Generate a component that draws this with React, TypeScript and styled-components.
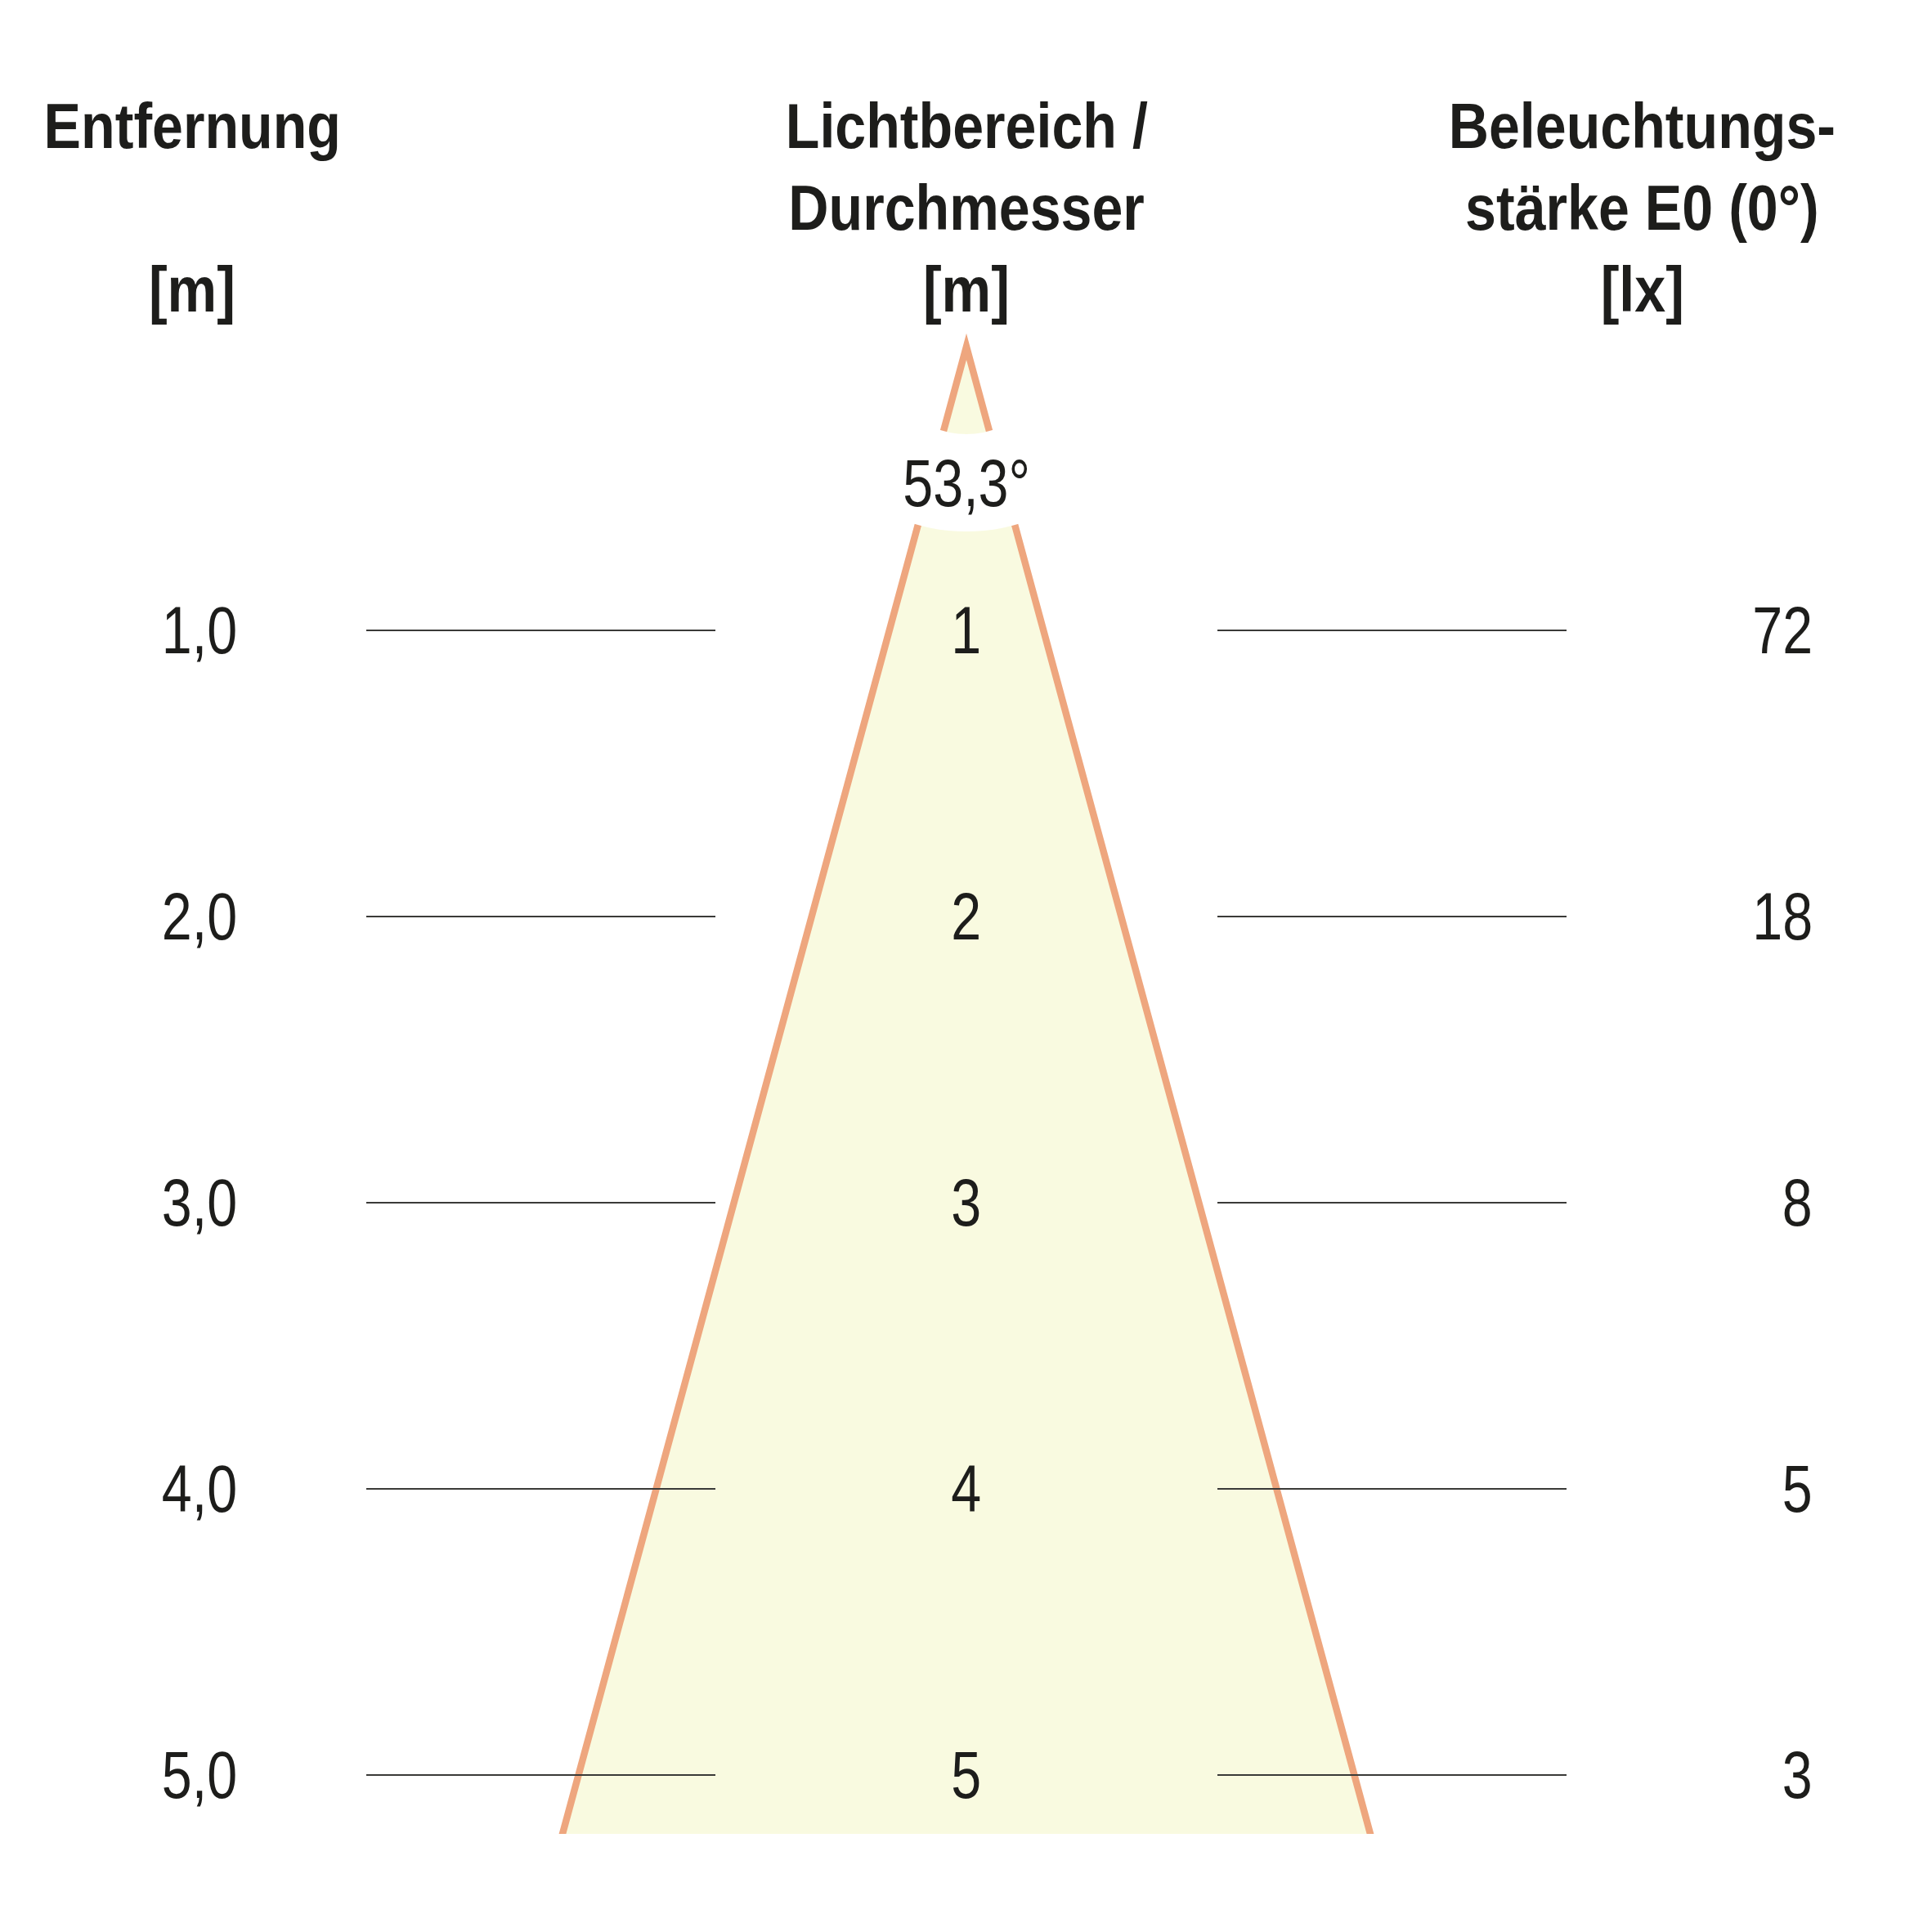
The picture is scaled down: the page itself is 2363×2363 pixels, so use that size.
import React from "react";
import styled, { createGlobalStyle } from "styled-components";

const GlobalStyle = createGlobalStyle`
  html, body {
    margin: 0;
    padding: 0;
    background: #ffffff;
  }
  body {
    font-family: "Liberation Sans", Arial, sans-serif;
    color: #1d1d1b;
  }
`;

// Narrow look of the original typeface (Helvetica Condensed style)
const NARROW = 0.81;
const NARROW_BOLD = 0.885;

const BEAM = {
  cx: 1182,
  top: 424,
  bottom: 2243,
  halfWidth: 494,
  gapInner: 107,
  gapOuter: 226,
};

const rows = [
  { distance: "1,0", diameter: "1", lux: "72" },
  { distance: "2,0", diameter: "2", lux: "18" },
  { distance: "3,0", diameter: "3", lux: "8" },
  { distance: "4,0", diameter: "4", lux: "5" },
  { distance: "5,0", diameter: "5", lux: "3" },
];

const Page = styled.div`
  position: relative;
  width: 2363px;
  height: 2363px;
  overflow: hidden;
  background: #ffffff;
`;

const BeamLayer = styled.svg`
  position: absolute;
  left: 0;
  top: 0;
  width: 2363px;
  height: 2363px;
  pointer-events: none;
  z-index: 0;
`;

const Content = styled.div`
  position: relative;
  z-index: 1;
  display: flex;
  flex-direction: column;
  padding-top: 104px;
`;

const Header = styled.div`
  display: grid;
  grid-template-columns: 470px 240px 944px 1fr;
  align-items: start;
`;

const HeadColumn = styled.div<{ $col: number }>`
  grid-column: ${(p) => p.$col};
  display: flex;
  flex-direction: column;
  align-items: center;
  font-weight: 700;
  font-size: 77px;
  line-height: 100px;
  white-space: nowrap;
`;

const HeadLine = styled.span<{ $skip?: boolean }>`
  display: inline-block;
  margin-top: ${(p) => (p.$skip ? "100px" : "0")};
  transform: scaleX(${NARROW_BOLD});
  transform-origin: center;
`;

const AngleRow = styled.div`
  height: 307px;
  box-sizing: border-box;
  padding-top: 146px;
  display: grid;
  grid-template-columns: 875px 614px 1fr;
`;

const Cell = styled.div<{ $justify: "center" | "flex-end"; $pad?: number }>`
  display: flex;
  justify-content: ${(p) => p.$justify};
  padding-left: ${(p) => p.$pad ?? 0}px;
  font-size: 82px;
  line-height: 1;
  white-space: nowrap;
`;

const Narrow = styled.span<{ $origin: "center" | "right" }>`
  display: inline-block;
  transform: scaleX(${NARROW});
  transform-origin: ${(p) => p.$origin};
`;

const AngleCell = styled(Cell)`
  grid-column: 2;
`;

const Table = styled.div`
  display: flex;
  flex-direction: column;
  gap: 230px;
`;

const Row = styled.div`
  display: grid;
  grid-template-columns: 448px 427px 614px 427px 301px 1fr;
  align-items: center;
  height: 120px;
`;

const Rule = styled.div`
  height: 2px;
  background: #3a3a38;
`;

const Beam: React.FC = () => {
  const { cx, top, bottom, halfWidth, gapInner, gapOuter } = BEAM;
  const slope = halfWidth / (bottom - top);
  const far = bottom + 150;
  const spread = slope * (far - top);
  return (
    <BeamLayer viewBox="0 0 2363 2363" xmlns="http://www.w3.org/2000/svg">
      <defs>
        <clipPath id="beam-clip">
          <rect x="0" y="0" width="2363" height={bottom} />
        </clipPath>
        <mask id="angle-gap">
          <rect x="0" y="0" width="2363" height="2363" fill="#fff" />
          <circle cx={cx} cy={top} r={gapOuter} fill="#000" />
          <circle cx={cx} cy={top} r={gapInner} fill="#fff" />
        </mask>
      </defs>
      <g clipPath="url(#beam-clip)" mask="url(#angle-gap)">
        <polygon
          points={`${cx},${top} ${cx + spread},${far} ${cx - spread},${far}`}
          fill="#f9fae0"
        />
        <polyline
          points={`${cx - spread},${far} ${cx},${top} ${cx + spread},${far}`}
          fill="none"
          stroke="#eea67e"
          strokeWidth={8.5}
          strokeLinejoin="miter"
          strokeMiterlimit={10}
        />
      </g>
    </BeamLayer>
  );
};

export default function App() {
  return (
    <>
      <GlobalStyle />
      <Page>
        <Beam />
        <Content>
          <Header>
            <HeadColumn $col={1}>
              <HeadLine>Entfernung</HeadLine>
              <HeadLine $skip>[m]</HeadLine>
            </HeadColumn>
            <HeadColumn $col={3}>
              <HeadLine>Lichtbereich /</HeadLine>
              <HeadLine>Durchmesser</HeadLine>
              <HeadLine>[m]</HeadLine>
            </HeadColumn>
            <HeadColumn $col={4}>
              <HeadLine>Beleuchtungs-</HeadLine>
              <HeadLine>stärke E0 (0°)</HeadLine>
              <HeadLine>[lx]</HeadLine>
            </HeadColumn>
          </Header>
          <AngleRow>
            <AngleCell $justify="center">
              <Narrow $origin="center">53,3°</Narrow>
            </AngleCell>
          </AngleRow>
          <Table>
            {rows.map((row) => (
              <Row key={row.distance}>
                <Cell $justify="center" $pad={40}>
                  <Narrow $origin="center">{row.distance}</Narrow>
                </Cell>
                <Rule />
                <Cell $justify="center">
                  <Narrow $origin="center">{row.diameter}</Narrow>
                </Cell>
                <Rule />
                <Cell $justify="flex-end">
                  <Narrow $origin="right">{row.lux}</Narrow>
                </Cell>
              </Row>
            ))}
          </Table>
        </Content>
      </Page>
    </>
  );
}
